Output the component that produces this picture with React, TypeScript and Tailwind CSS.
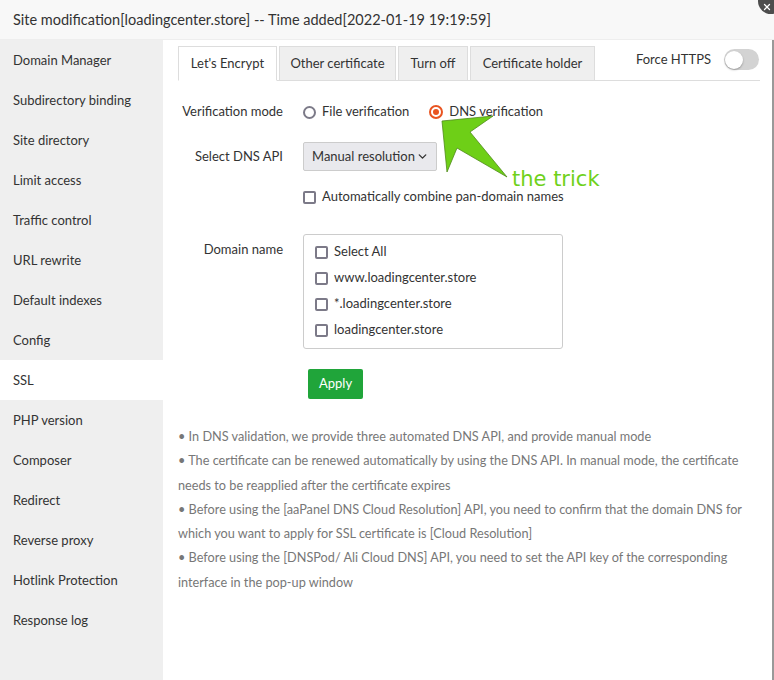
import { ChevronDown, X } from 'lucide-react';

const menu = [
  'Domain Manager',
  'Subdirectory binding',
  'Site directory',
  'Limit access',
  'Traffic control',
  'URL rewrite',
  'Default indexes',
  'Config',
  'SSL',
  'PHP version',
  'Composer',
  'Redirect',
  'Reverse proxy',
  'Hotlink Protection',
  'Response log',
];

const tabs = [
  { label: "Let's Encrypt", w: 'w-[99px]' },
  { label: 'Other certificate', w: 'w-[117px]' },
  { label: 'Turn off', w: 'w-[70px]' },
  { label: 'Certificate holder', w: 'w-[125px]' },
];

const domains = ['Select All', 'www.loadingcenter.store', '*.loadingcenter.store', 'loadingcenter.store'];

const notes = [
  '•  In DNS validation, we provide three automated DNS API, and provide manual mode',
  '•  The certificate can be renewed automatically by using the DNS API. In manual mode, the certificate',
  'needs to be reapplied after the certificate expires',
  '•  Before using the [aaPanel DNS Cloud Resolution] API, you need to confirm that the domain DNS for',
  'which you want to apply for SSL certificate is [Cloud Resolution]',
  '•  Before using the [DNSPod/ Ali Cloud DNS] API, you need to set the API key of the corresponding',
  'interface in the pop-up window',
];

function Box() {
  return <span className="w-[13px] h-[13px] rounded-[2px] border-2 border-[#7c7a88] bg-white shrink-0" />;
}

export default function App() {
  return (
    <div className="relative w-[774px] h-[680px] overflow-hidden bg-white text-[#333] font-['Lato',sans-serif]">
      {/* Title */}
      <div className="h-[40px] bg-[#f8f8f8] border-b border-[#eee] flex items-center pl-[13px] pr-[2px] text-[14.5px] text-[#333]">
        Site modification[loadingcenter.store] -- Time added[2022-01-19 19:19:59]
      </div>
      <div className="flex h-[640px] border-r-2 border-[#999]">
        {/* Sidebar */}
        <div className="w-[163px] bg-[#efefef] shrink-0">
          {menu.map((m) => (
            <div
              key={m}
              className={`h-[40px] flex items-center pl-[13px] pt-[2px] text-[13px] text-[#333] ${m === 'SSL' ? 'bg-white' : ''}`}
            >
              {m}
            </div>
          ))}
        </div>

        {/* Content */}
        <div className="flex-1 pl-[15px] pr-[12px] pt-[7px]">
          {/* Tabs */}
          <div className="flex items-end h-[34px] border-b border-[#ddd] relative">
            <div className="flex gap-[2px] items-end">
              {tabs.map((t, i) => (
                <div
                  key={t.label}
                  className={`${t.w} flex items-center justify-center pt-[1px] whitespace-nowrap text-[13px] border border-[#ddd] ${
                    i === 0 ? 'bg-white border-b-white -mb-px h-[35px]' : 'bg-[#efefef] border-b-0 h-[34px]'
                  }`}
                >
                  {t.label}
                </div>
              ))}
            </div>
            <div className="ml-auto flex items-center gap-[13px] self-start pt-[2px] pr-[1px]">
              <span className="text-[13px] text-[#333]">Force HTTPS</span>
              <span className="w-[35px] h-[21px] rounded-full bg-[#d3d3d3] flex items-center pl-[1px]">
                <span className="w-[18px] h-[18px] rounded-full bg-white shadow-[0_1px_2px_rgba(0,0,0,0.3)]" />
              </span>
            </div>
          </div>

          {/* Form */}
          <div className="text-[13px] text-[#333]">
            <div className="flex items-center h-[20px] mt-[21px]">
              <span className="w-[105px] text-right">Verification mode</span>
              <label className="flex items-center ml-[20px]">
                <span className="w-[13px] h-[13px] rounded-full border-2 border-[#7c7a88] bg-white" />
                <span className="ml-[6px]">File verification</span>
              </label>
              <label className="flex items-center ml-[20px]">
                <span className="w-[14px] h-[14px] rounded-full border-2 border-[#e95420] bg-white flex items-center justify-center">
                  <span className="w-[6px] h-[6px] rounded-full bg-[#e95420]" />
                </span>
                <span className="ml-[6px]">DNS verification</span>
              </label>
            </div>

            <div className="flex items-center h-[29px] mt-[20px]">
              <span className="w-[105px] text-right">Select DNS API</span>
              <div className="ml-[20px] w-[134px] h-[29px] bg-[#e9e9ed] border border-[#ccc] rounded-[2px] flex items-center pl-[8px] pr-[7px] justify-between whitespace-nowrap">
                <span>Manual resolution</span>
                <ChevronDown size={13} strokeWidth={2.5} />
              </div>
            </div>

            <div className="flex items-center h-[20px] mt-[16px] ml-[125px]">
              <Box />
              <span className="ml-[6px]">Automatically combine pan-domain names</span>
            </div>

            <div className="flex items-start mt-[27px]">
              <span className="w-[105px] text-right mt-[6px]">Domain name</span>
              <div className="ml-[20px] w-[260px] h-[115px] border border-[#ccc] rounded-[3px] pl-[11px] pt-[7px] flex flex-col gap-[6px]">
                {domains.map((d) => (
                  <div key={d} className="flex items-center h-[20px]">
                    <Box />
                    <span className="ml-[6px]">{d}</span>
                  </div>
                ))}
              </div>
            </div>

            <div className="ml-[130px] mt-[20px]">
              <button className="h-[30px] px-[11px] bg-[#20a53a] text-white text-[13px] rounded-[2px]">Apply</button>
            </div>
          </div>

          {/* Notes */}
          <div className="mt-[25px] text-[12.7px] text-[#777] leading-[24.3px]">
            {notes.map((n) => (
              <div key={n} className="whitespace-nowrap">{n}</div>
            ))}
          </div>
        </div>
      </div>

      {/* Close button */}
      <div className="absolute left-[758px] top-[-12px] w-[26px] h-[26px] rounded-full bg-[#4d4d4d] flex items-end justify-start pl-[4px] pb-[2px]">
        <X size={10} color="#fff" strokeWidth={3} />
      </div>

      {/* Annotation */}
      <svg className="absolute left-0 top-0 pointer-events-none" width="774" height="680">
        <polygon
          points="442,121 493,116 470,132 507,177 457,148 447,172"
          fill="#6ecf17"
          stroke="#4f8a1a"
          strokeWidth="0.8"
        />
      </svg>
      <div className="absolute left-[512px] top-[165px] text-[21px] leading-[28px] text-[#6fd11a] font-['DejaVu_Sans',sans-serif]">
        the trick
      </div>
    </div>
  );
}
